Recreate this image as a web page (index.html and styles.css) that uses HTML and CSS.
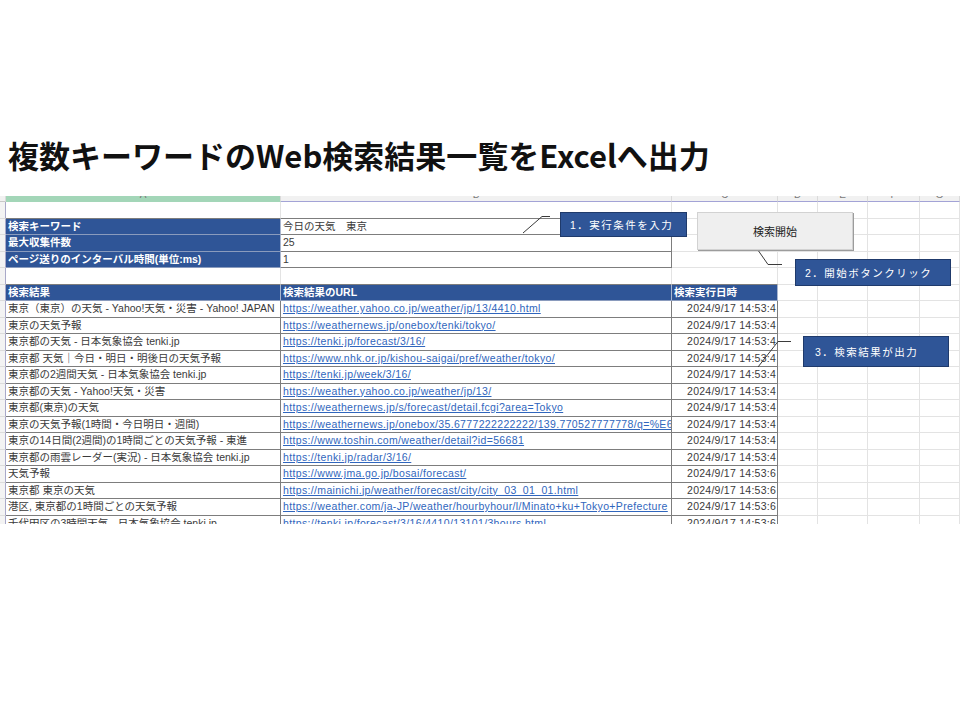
FILE: index.html
```html
<!DOCTYPE html>
<html lang="ja">
<head>
  <meta charset="UTF-8">
  <title>複数キーワードのWeb検索結果一覧をExcelへ出力</title>
  <link rel="stylesheet" href="styles.css">
</head>
<body>
  <div class="slide">
    <h1 class="title">複数キーワードのWeb検索結果一覧をExcelへ出力</h1>

    <div class="sheet" id="sheet">
      <div class="row colhead">
        <div class="cell rh"></div>
        <div class="cell sel"><span>A</span></div>
        <div class="cell"><span>B</span></div>
        <div class="cell"><span>C</span></div>
        <div class="cell"><span>D</span></div>
        <div class="cell"><span>E</span></div>
        <div class="cell"><span>F</span></div>
        <div class="cell"><span>G</span></div>
      </div>
    </div>

    <!-- callouts drawn over the sheet -->
    <svg class="leaders" width="960" height="720" viewBox="0 0 960 720">
      <polyline points="523,233 542,216.5 550,216.5" />
      <polyline points="753,243 768,264.5 782,264.5" />
      <polyline points="758,367 778,341.5 791,341.5" />
    </svg>
    <div class="note note1">1．実行条件を入力</div>
    <div class="start-btn">検索開始</div>
    <div class="note note2">2．開始ボタンクリック</div>
    <div class="note note3">3．検索結果が出力</div>
  </div>

  <script>
    const conditions = [
      ['検索キーワード', '今日の天気　東京'],
      ['最大収集件数', '25'],
      ['ページ送りのインターバル時間(単位:ms)', '1']
    ];

    const results = [
      ['東京（東京）の天気 - Yahoo!天気・災害 - Yahoo! JAPAN', 'https://weather.yahoo.co.jp/weather/jp/13/4410.html', '2024/9/17 14:53:4'],
      ['東京の天気予報', 'https://weathernews.jp/onebox/tenki/tokyo/', '2024/9/17 14:53:4'],
      ['東京都の天気 - 日本気象協会 tenki.jp', 'https://tenki.jp/forecast/3/16/', '2024/9/17 14:53:4'],
      ['東京都 天気｜今日・明日・明後日の天気予報', 'https://www.nhk.or.jp/kishou-saigai/pref/weather/tokyo/', '2024/9/17 14:53:4'],
      ['東京都の2週間天気 - 日本気象協会 tenki.jp', 'https://tenki.jp/week/3/16/', '2024/9/17 14:53:4'],
      ['東京都の天気 - Yahoo!天気・災害', 'https://weather.yahoo.co.jp/weather/jp/13/', '2024/9/17 14:53:4'],
      ['東京都(東京)の天気', 'https://weathernews.jp/s/forecast/detail.fcgi?area=Tokyo', '2024/9/17 14:53:4'],
      ['東京の天気予報(1時間・今日明日・週間)', 'https://weathernews.jp/onebox/35.6777222222222/139.770527777778/q=%E6%9', '2024/9/17 14:53:4'],
      ['東京の14日間(2週間)の1時間ごとの天気予報 - 東進', 'https://www.toshin.com/weather/detail?id=56681', '2024/9/17 14:53:4'],
      ['東京都の雨雲レーダー(実況) - 日本気象協会 tenki.jp', 'https://tenki.jp/radar/3/16/', '2024/9/17 14:53:4'],
      ['天気予報', 'https://www.jma.go.jp/bosai/forecast/', '2024/9/17 14:53:6'],
      ['東京都 東京の天気', 'https://mainichi.jp/weather/forecast/city/city_03_01_01.html', '2024/9/17 14:53:6'],
      ['港区, 東京都の1時間ごとの天気予報', 'https://weather.com/ja-JP/weather/hourbyhour/l/Minato+ku+Tokyo+Prefecture', '2024/9/17 14:53:6'],
      ['千代田区の3時間天気 - 日本気象協会 tenki.jp', 'https://tenki.jp/forecast/3/16/4410/13101/3hours.html', '2024/9/17 14:53:6']
    ];

    const sheet = document.getElementById('sheet');

    function addRow(cells) {
      const row = document.createElement('div');
      row.className = 'row';
      let html = '<div class="cell rh"></div>';
      for (let i = 0; i < 7; i++) {
        const c = cells[i] || {};
        html += `<div class="cell ${c.cls || ''}">${c.html || ''}</div>`;
      }
      row.innerHTML = html;
      sheet.appendChild(row);
    }

    addRow([{ cls: 'edge' }, { cls: 'edge' }]);
    for (let [key, value] of conditions) {
      addRow([{ cls: 'boxed label', html: key }, { cls: 'boxed', html: value }]);
    }
    addRow([{ cls: 'edge' }, { cls: 'edge' }, { cls: 'edge' }]);
    addRow([
      { cls: 'boxed label', html: '検索結果' },
      { cls: 'boxed label', html: '検索結果のURL' },
      { cls: 'boxed label', html: '検索実行日時' }
    ]);
    for (let r of results) {
      addRow([
        { cls: 'boxed', html: r[0] },
        { cls: 'boxed', html: `<a href="${r[1]}">${r[1]}</a>` },
        { cls: 'boxed date', html: r[2] }
      ]);
    }
  </script>
</body>
</html>
```

FILE: styles.css
```css
body {
  margin: 0;
  background: #fff;
  font-family: 'Liberation Sans', 'Noto Sans CJK JP', sans-serif;
  color: #3a3a3a;
}
.slide {
  position: relative;
  width: 960px;
  height: 720px;
  overflow: hidden;
}
.title {
  margin: 0;
  padding: 135px 0 0 8px;
  font-family: 'Noto Sans CJK JP', sans-serif;
  font-size: 31px;
  line-height: 40px;
  font-weight: 700;
  color: #111;
  letter-spacing: 0;
}
.sheet {
  margin-top: 21px;
  height: 328px;
  overflow: hidden;
}
.row {
  display: grid;
  grid-template-columns: 6px 275px 391px 106px 40px 50px 52px 1fr;
  height: 16.5px;
}
.cell {
  box-sizing: border-box;
  border-right: 1px solid #e3e3e3;
  border-bottom: 1px solid #e3e3e3;
  padding: 0 2px;
  font-size: 10.5px;
  line-height: 15.5px;
  white-space: nowrap;
  overflow: hidden;
}
.rh {
  background: #f3f3f3;
  border-right-color: #a9a9c9;
  border-bottom-color: #dcdcdc;
  padding: 0;
}
.edge {
  border-bottom-color: #7d7d7d;
}
.boxed {
  border-right-color: #7d7d7d;
  border-bottom-color: #7d7d7d;
}
.label {
  background: #2f5597;
  color: #fff;
  font-weight: 700;
  border-right-color: #a9b6cf;
  border-bottom-color: #8a9bbd;
}
.date {
  text-align: right;
  padding-right: 1px;
  letter-spacing: 0.25px;
}
.boxed a {
  color: #3066bd;
  text-decoration: underline;
  letter-spacing: 0.35px;
}

/* column letters, mostly cut off at the top */
.colhead {
  height: 6px;
}
.colhead .cell {
  background: #f1f1f1;
  border-bottom: 1px solid #a3a3d6;
  border-right-color: #dadada;
  text-align: center;
  color: #7a7a7a;
  font-size: 10px;
}
.colhead .cell span {
  display: block;
  line-height: 10px;
  margin-top: -6px;
}
.colhead .rh {
  border-bottom-color: #c8c8c8;
}
.colhead .sel {
  background: #a3d6b8;
  border-bottom-color: #a3d6b8;
}

.leaders {
  position: absolute;
  left: 0;
  top: 0;
  pointer-events: none;
}
.leaders polyline {
  fill: none;
  stroke: #3b3b3b;
  stroke-width: 1;
}
.note {
  position: absolute;
  box-sizing: border-box;
  display: flex;
  align-items: center;
  background: #2f5597;
  border: 1px solid #1f3a6b;
  color: #fff;
  font-size: 10.5px;
  letter-spacing: 1.5px;
  padding-left: 9px;
  white-space: nowrap;
}
.note1 { left: 560px; top: 212px; width: 127px; height: 25px; }
.note2 { left: 795px; top: 259px; width: 156px; height: 27px; }
.note3 { left: 803px; top: 336px; width: 146px; height: 31px; padding-left: 11px; }
.start-btn {
  position: absolute;
  left: 697px;
  top: 212px;
  width: 156px;
  height: 38px;
  box-sizing: border-box;
  display: flex;
  align-items: center;
  justify-content: center;
  background: #efefef;
  border: 1px solid #d2d2d2;
  box-shadow: 1px 1px 0 #9c9c9c;
  font-size: 11px;
  color: #222;
}
```
